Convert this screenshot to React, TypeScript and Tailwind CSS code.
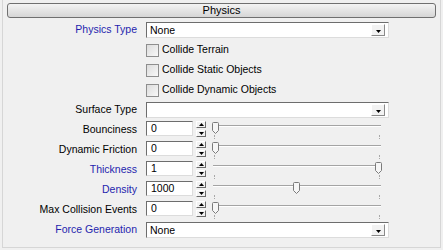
import React from 'react';

const font = { fontFamily: '"Liberation Sans", Arial, sans-serif' };

const Label: React.FC<{ text: string; blue?: boolean }> = ({ text, blue }) => (
  <div className={`text-right pr-[9px] whitespace-nowrap ${blue ? 'text-[#1f1fae]' : 'text-black'}`}>{text}</div>
);

const Dropdown: React.FC<{ value?: string }> = ({ value }) => (
  <div className="w-[243px] h-[16px] bg-white border border-t-[#6d6d6d] border-l-[#6d6d6d] border-b-[#dcdcdc] border-r-[#dcdcdc] flex items-center pl-[3px] pr-[3px]">
    <span className="flex-1 leading-none">{value}</span>
    <div className="w-[14px] h-[12px] bg-[#f2f2f2] border border-t-white border-l-white border-b-[#8a8a8a] border-r-[#8a8a8a] flex items-center justify-center pt-[2px]">
      <svg width="5" height="3" viewBox="0 0 5 3"><path d="M0 0 H5 L2.5 3 Z" fill="#000" /></svg>
    </div>
  </div>
);

const Checkbox: React.FC<{ text: string }> = ({ text }) => (
  <div className="flex items-center gap-[3px]">
    <div className="w-[13px] h-[13px] border border-[#8e8e8e] bg-gradient-to-br from-[#dcdcdc] to-[#f8f8f8]" />
    <span>{text}</span>
  </div>
);

const SpinBtn: React.FC<{ up?: boolean }> = ({ up }) => (
  <div className="w-[10px] h-[7px] bg-[#f2f2f2] border border-t-white border-l-white border-b-[#6a6a6a] border-r-[#6a6a6a] flex items-center justify-center">
    <svg width="5" height="3" viewBox="0 0 5 3">
      <path d={up ? 'M0 3 L2.5 0 L5 3 Z' : 'M0 0 H5 L2.5 3 Z'} fill="#000" />
    </svg>
  </div>
);

const Slider: React.FC<{ pos: number }> = ({ pos }) => (
  <div className="relative w-[172px] h-[20px] ml-[5px]">
    <div className="absolute left-[2px] right-[2px] top-[5px] h-[2px] border-t border-t-[#a4a4a4] border-b border-b-white" />
    <div className="absolute top-[15px] left-[3px] w-px h-[4px] border-l border-dotted border-[#a8a8a8]" />
    <div className="absolute top-[15px] right-[3px] w-px h-[4px] border-l border-dotted border-[#a8a8a8]" />
    <svg className="absolute top-[2px]" style={{ left: pos }} width="7" height="12" viewBox="0 0 7 12">
      <path d="M1.5 0.5 H5.5 Q6.5 0.5 6.5 1.5 V8.5 L3.5 11.5 L0.5 8.5 V1.5 Q0.5 0.5 1.5 0.5 Z" fill="#f6f6f6" stroke="#7b7b7b" />
    </svg>
  </div>
);

const NumberRow: React.FC<{ value: string; pos: number }> = ({ value, pos }) => (
  <div className="flex items-start h-[20px] pt-[1px]">
    <div className="w-[47px] h-[15px] bg-white border border-t-[#6d6d6d] border-l-[#6d6d6d] border-b-[#dcdcdc] border-r-[#dcdcdc] pl-[4px] flex items-center leading-none">
      {value}
    </div>
    <div className="ml-[3px] flex flex-col gap-[2px]">
      <SpinBtn up />
      <SpinBtn />
    </div>
    <div className="-mt-[1px]">
      <Slider pos={pos} />
    </div>
  </div>
);

const App: React.FC = () => {
  const rows: { label: string; blue?: boolean; control: React.ReactNode }[] = [
    { label: 'Physics Type', blue: true, control: <Dropdown value="None" /> },
    { label: '', control: <Checkbox text="Collide Terrain" /> },
    { label: '', control: <Checkbox text="Collide Static Objects" /> },
    { label: '', control: <Checkbox text="Collide Dynamic Objects" /> },
    { label: 'Surface Type', control: <Dropdown /> },
    { label: 'Bounciness', control: <NumberRow value="0" pos={1} /> },
    { label: 'Dynamic Friction', control: <NumberRow value="0" pos={1} /> },
    { label: 'Thickness', blue: true, control: <NumberRow value="1" pos={164} /> },
    { label: 'Density', blue: true, control: <NumberRow value="1000" pos={82} /> },
    { label: 'Max Collision Events', control: <NumberRow value="0" pos={1} /> },
    { label: 'Force Generation', blue: true, control: <Dropdown value="None" /> },
  ];

  return (
    <div className="w-[443px] h-[250px] bg-[#f0f0f0] text-[10.5px] pt-0 px-[2px] pb-[2px]" style={font}>
      <div className="h-[248px] border-l border-r border-b border-[#d6d6d6] pt-[3px] px-[4px]">
        <div className="h-[15px] rounded-[3px] border border-[#707070] bg-gradient-to-b from-[#f4f4f4] to-[#d6d6d6] flex items-center justify-center text-black text-[11px] leading-none">
          Physics
        </div>
        <div className="mt-[2px] grid grid-cols-[139px_1fr]">
          {rows.map((r, i) => (
            <React.Fragment key={i}>
              <div className="h-[20px] flex items-center justify-end">
                {r.label && <Label text={r.label} blue={r.blue} />}
              </div>
              <div className="h-[20px] flex items-center">{r.control}</div>
            </React.Fragment>
          ))}
        </div>
      </div>
    </div>
  );
};

export default App;
